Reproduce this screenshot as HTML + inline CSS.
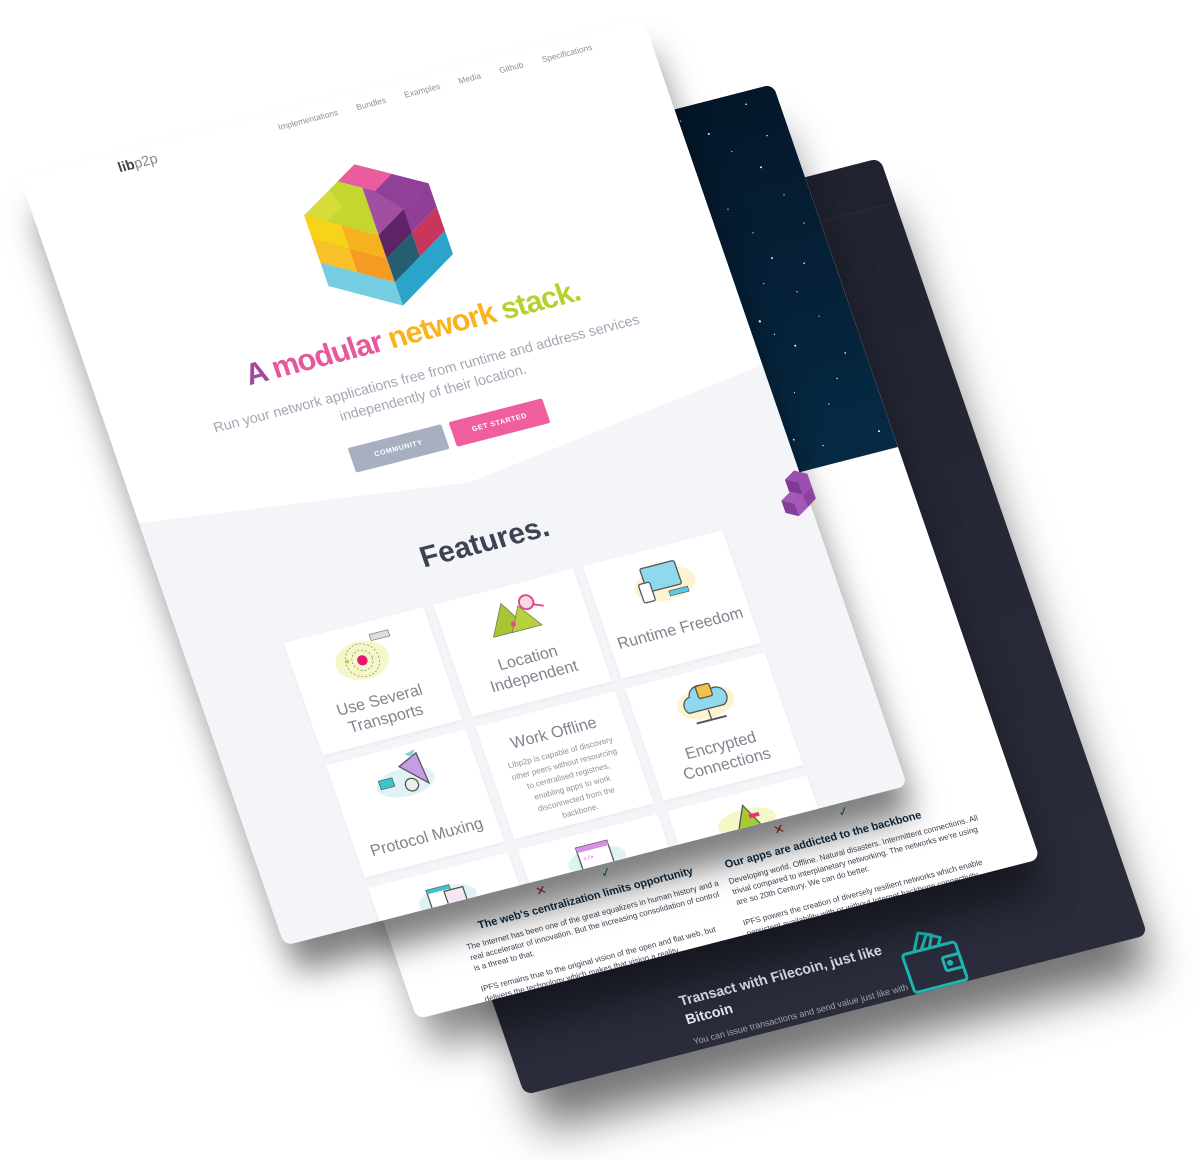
<!DOCTYPE html>
<html><head><meta charset="utf-8">
<style>
html,body{margin:0;padding:0;background:#fff;width:1195px;height:1160px;overflow:hidden;font-family:"Liberation Sans",sans-serif}
.pg{position:absolute;left:0;top:0;width:1000px;transform-origin:0 0;border-radius:14px;overflow:hidden}
.abs{position:absolute}
.nav span{margin-left:30px}
.card{position:absolute;width:224px;background:#fff;box-shadow:0 2px 6px rgba(40,50,80,.06);text-align:center;color:#6e727c}
.ct{font-size:25px;line-height:30px;color:#80848e}
.star{fill:#fff}
</style></head><body>

<!-- BACK PAGE -->
<div class="pg" style="height:1265px;transform:matrix(0.623,-0.16,0.2115,0.6142,257,318);background:linear-gradient(180deg,#20222f 0%,#262837 50%,#2a2c3b 100%);box-shadow:0 70px 70px -10px rgba(0,0,0,.55)">
  <div class="abs" style="left:0;top:72px;width:1000px;height:1px;background:#33364a"></div>
  <div class="abs" style="left:276px;top:1170px;width:400px;color:#e6e7ee;font-size:22px;line-height:30px;font-weight:bold">Transact with Filecoin, just like<br>Bitcoin</div>
  <div class="abs" style="left:276px;top:1240px;width:380px;color:#9ea1ae;font-size:14px;line-height:20px">You can issue transactions and send value just like with <u>Bitcoin and other cryptocurrencies</u>. And by doing so...</div>
  <svg class="abs" style="left:615px;top:1170px" width="110" height="100" viewBox="0 0 140 130">
    <g fill="none" stroke="#1eb5b0" stroke-width="6" stroke-linejoin="round">
      <path d="M40 40 L60 5 L85 15 L72 40"/>
      <path d="M55 40 L75 12 L100 25 L90 40"/>
      <rect x="15" y="40" width="110" height="80" rx="6"/>
      <rect x="90" y="65" width="35" height="28" rx="4"/>
      <circle cx="102" cy="79" r="3" fill="#1eb5b0"/>
    </g>
  </svg>
</div>

<!-- MIDDLE PAGE -->
<div class="pg" style="height:1262px;transform:matrix(0.623,-0.16,0.2115,0.6142,150,244);background:#fff;box-shadow:0 60px 60px -10px rgba(0,0,0,.45)">
  <div class="abs" style="left:0;top:0;width:1000px;height:591px;background:linear-gradient(180deg,#04172a,#072a44)">
    <svg width="1000" height="591" style="position:absolute;left:0;top:0">
      <g class="star">
        <circle cx="640" cy="40" r="1.6"/><circle cx="700" cy="70" r="1"/><circle cx="760" cy="30" r="1.8"/><circle cx="820" cy="90" r="1"/><circle cx="880" cy="50" r="1.5"/><circle cx="950" cy="20" r="1.2"/>
        <circle cx="610" cy="120" r="1"/><circle cx="680" cy="150" r="1.5"/><circle cx="740" cy="190" r="1"/><circle cx="800" cy="140" r="1.4"/><circle cx="870" cy="170" r="1"/><circle cx="940" cy="120" r="1.5"/>
        <circle cx="630" cy="230" r="1.4"/><circle cx="700" cy="260" r="1"/><circle cx="770" cy="250" r="1.8"/><circle cx="840" cy="230" r="1"/><circle cx="910" cy="260" r="1.4"/><circle cx="975" cy="220" r="1"/>
        <circle cx="650" cy="320" r="1"/><circle cx="720" cy="340" r="1.5"/><circle cx="790" cy="310" r="1"/><circle cx="860" cy="350" r="1.8"/><circle cx="930" cy="320" r="1"/>
        <circle cx="620" cy="400" r="1.5"/><circle cx="690" cy="430" r="1"/><circle cx="760" cy="410" r="1.4"/><circle cx="830" cy="440" r="1"/><circle cx="900" cy="400" r="1.5"/><circle cx="970" cy="430" r="1.2"/>
        <circle cx="640" cy="500" r="1"/><circle cx="710" cy="520" r="1.8"/><circle cx="780" cy="490" r="1"/><circle cx="850" cy="540" r="1.4"/><circle cx="920" cy="500" r="1"/><circle cx="980" cy="560" r="1.5"/>
        <circle cx="665" cy="95" r="0.9"/><circle cx="725" cy="115" r="1.2"/><circle cx="785" cy="60" r="0.9"/><circle cx="845" cy="20" r="1"/><circle cx="905" cy="85" r="0.9"/><circle cx="965" cy="75" r="1.1"/>
        <circle cx="655" cy="185" r="0.9"/><circle cx="715" cy="215" r="1.1"/><circle cx="775" cy="165" r="0.9"/><circle cx="835" cy="195" r="1.2"/><circle cx="895" cy="215" r="0.9"/><circle cx="960" cy="170" r="1"/>
        <circle cx="670" cy="285" r="1"/><circle cx="740" cy="295" r="0.9"/><circle cx="810" cy="275" r="1.1"/><circle cx="885" cy="295" r="0.9"/><circle cx="955" cy="280" r="1.2"/>
        <circle cx="665" cy="370" r="0.9"/><circle cx="735" cy="380" r="1.1"/><circle cx="805" cy="365" r="0.9"/><circle cx="875" cy="375" r="1"/><circle cx="950" cy="365" r="0.9"/>
        <circle cx="660" cy="460" r="1.1"/><circle cx="730" cy="470" r="0.9"/><circle cx="805" cy="455" r="1"/><circle cx="875" cy="470" r="0.9"/><circle cx="945" cy="465" r="1.1"/>
        <circle cx="675" cy="555" r="0.9"/><circle cx="745" cy="565" r="1"/><circle cx="815" cy="575" r="0.9"/><circle cx="890" cy="560" r="1.1"/>
        <circle cx="560" cy="60" r="1.5"/><circle cx="520" cy="200" r="1"/><circle cx="570" cy="330" r="1.4"/><circle cx="540" cy="470" r="1"/>
      </g>
    </svg>
    <div class="abs" style="left:560px;top:40px;color:#fff;font-size:13px">Blog</div>
  </div>
  <div class="abs" style="left:240px;top:1105px;color:#c0282f;font-size:20px">✕</div>
  <div class="abs" style="left:345px;top:1103px;color:#1a8a8a;font-size:20px">✓</div>
  <div class="abs" style="left:622px;top:1105px;color:#c0282f;font-size:20px">✕</div>
  <div class="abs" style="left:726px;top:1103px;color:#1a8a8a;font-size:20px">✓</div>
  <div class="abs" style="left:110px;top:1136px;width:400px;text-align:center;color:#0c2d4a;font-size:17px;font-weight:bold">The web's centralization limits opportunity</div>
  <div class="abs" style="left:490px;top:1140px;width:400px;text-align:center;color:#0c2d4a;font-size:17px;font-weight:bold">Our apps are addicted to the backbone</div>
  <div class="abs" style="left:110px;top:1166px;width:410px;color:#3c4350;font-size:12.5px;line-height:17px">The Internet has been one of the great equalizers in human history and a real accelerator of innovation. But the increasing consolidation of control is a threat to that.<br><br>IPFS remains true to the original vision of the open and flat web, but delivers the technology which makes that vision a reality.</div>
  <div class="abs" style="left:530px;top:1168px;width:410px;color:#3c4350;font-size:12.5px;line-height:17px">Developing world. Offline. Natural disasters. Intermittent connections. All trivial compared to interplanetary networking. The networks we're using are so 20th Century. We can do better.<br><br>IPFS powers the creation of diversely resilient networks which enable persistent availability with or without Internet backbone connectivity.</div>
</div>

<!-- FRONT PAGE -->
<div class="pg" style="height:1250px;transform:matrix(0.623,-0.16,0.2115,0.6142,20,178);background:#f4f5f9;box-shadow:0 50px 50px -5px rgba(0,0,0,.5);overflow:visible">
  <div style="position:absolute;inset:0;border-radius:14px;overflow:hidden">
  <svg class="abs" style="left:0;top:0" width="1000" height="640"><polygon points="0,0 1000,0 1000,565 509,628 0,562" fill="#fff"/></svg>
  <div class="abs" style="left:150px;top:10px;font-size:22px;color:#555"><b style="color:#444">lib</b><span style="font-weight:normal;color:#888">p2p</span></div>
  <div class="abs nav" style="left:350px;top:16px;width:560px;text-align:right;font-size:13px;color:#8c909c;white-space:nowrap"><span>Implementations</span><span>Bundles</span><span>Examples</span><span>Media</span><span>Github</span><span>Specifications</span></div>
  <svg class="abs" style="left:400px;top:108px" width="200" height="230" viewBox="0 0 200 230">
    <polygon points="0,57 100,0 100,115" fill="#c4d630"/>
    <polygon points="0,57 50,29 60,60 20,80" fill="#d8dc3a"/>
    <polygon points="100,0 200,57 100,115" fill="#a24ea2"/>
    <polygon points="100,0 150,29 117,48 67,19" fill="#ea5c9d"/>
    <polygon points="117,48 150,29 200,57 150,86" fill="#8e4196"/>
    <polygon points="0,57 100,115 100,153 0,95" fill="#f6b21e"/>
    <polygon points="0,57 50,86 50,124 0,95" fill="#f8d31a"/>
    <polygon points="0,95 100,153 100,192 0,134" fill="#f59a22"/>
    <polygon points="0,95 50,124 50,163 0,134" fill="#f9c129"/>
    <polygon points="0,134 100,192 100,230 0,172" fill="#75cde2"/>
    <polygon points="100,115 200,57 200,95 100,153" fill="#8f3f98"/>
    <polygon points="100,115 150,86 150,124 100,153" fill="#5e2566"/>
    <polygon points="100,153 150,124 150,163 100,192" fill="#245e70"/>
    <polygon points="150,124 200,95 200,134 150,163" fill="#c9365c"/>
    <polygon points="100,192 200,134 200,172 100,230" fill="#2aa4c8"/>
  </svg>
  <div class="abs" style="left:0;top:354px;width:1000px;text-align:center;font-size:47px;font-weight:bold;letter-spacing:-1.5px;white-space:nowrap"><span style="color:#a04a9f">A</span> <span style="color:#e9579b">modular</span> <span style="color:#f8b31e">network</span> <span style="color:#b9cf2d">stack.</span></div>
  <div class="abs" style="left:0;top:433px;width:1000px;text-align:center;font-size:22px;line-height:31px;color:#a2a7b3">Run your network applications free from runtime and address services<br>independently of their location.</div>
  <div class="abs" style="left:346px;top:530px;width:150px;height:40px;background:#a7afc1;border-radius:3px;color:#fff;font-size:11px;font-weight:bold;letter-spacing:1px;text-align:center;line-height:40px">COMMUNITY</div>
  <div class="abs" style="left:508px;top:530px;width:150px;height:40px;background:#ef5fa0;border-radius:3px;color:#fff;font-size:11px;font-weight:bold;letter-spacing:1px;text-align:center;line-height:40px">GET STARTED</div>
  <div class="abs" style="left:0;top:695px;width:1000px;text-align:center;font-size:46px;font-weight:bold;color:#3d4352">Features.</div>

  <div class="card" style="left:153px;top:797px;height:183px">
    <svg width="120" height="80" style="margin-top:14px" viewBox="0 0 120 80"><ellipse cx="55" cy="42" rx="42" ry="30" fill="#f5f7c8"/><circle cx="55" cy="42" r="26" fill="none" stroke="#777" stroke-dasharray="3 3"/><circle cx="55" cy="42" r="16" fill="none" stroke="#777" stroke-dasharray="3 3"/><circle cx="55" cy="42" r="8" fill="#e8176e"/><circle cx="32" cy="38" r="3" fill="#b8d23a"/><rect x="78" y="6" width="30" height="10" fill="#ddd" stroke="#777"/></svg>
    <div class="ct" style="margin-top:8px">Use Several<br>Transports</div></div>
  <div class="card" style="left:393px;top:797px;height:183px">
    <svg width="120" height="70" style="margin-top:12px" viewBox="0 0 120 70"><polygon points="20,60 48,12 76,60" fill="#a7c634" stroke="#666"/><polygon points="50,60 72,22 98,60" fill="#b6d13c" stroke="#666"/><circle cx="86" cy="20" r="11" fill="#f7d8e6" stroke="#e04a8a" stroke-width="3"/><line x1="96" y1="26" x2="110" y2="32" stroke="#e04a8a" stroke-width="3"/><circle cx="56" cy="48" r="4" fill="#e04a8a"/></svg>
    <div class="ct" style="margin-top:14px">Location<br>Independent</div></div>
  <div class="card" style="left:633px;top:797px;height:183px">
    <svg width="120" height="80" style="margin-top:14px" viewBox="0 0 120 80"><ellipse cx="60" cy="44" rx="48" ry="26" fill="#fbf3d2"/><rect x="30" y="12" width="55" height="38" rx="3" fill="#8fd9ee" stroke="#555" stroke-width="2"/><rect x="20" y="35" width="18" height="30" rx="3" fill="#fff" stroke="#555" stroke-width="2"/><rect x="62" y="56" width="30" height="8" fill="#5cc9e6" stroke="#555"/></svg>
    <div class="ct" style="margin-top:16px">Runtime Freedom</div></div>
  <div class="card" style="left:153px;top:996px;height:183px">
    <svg width="130" height="80" style="margin-top:10px" viewBox="0 0 130 80"><ellipse cx="62" cy="46" rx="46" ry="22" fill="#dff3f6"/><polygon points="60,20 92,6 96,56" fill="#c79be6" stroke="#555" stroke-width="2"/><circle cx="70" cy="52" r="10" fill="#eee" stroke="#555" stroke-width="2"/><rect x="22" y="34" width="22" height="14" fill="#3fc3c7" stroke="#555"/><polygon points="74,4 92,0 84,10" fill="#7bd6d2"/></svg>
    <div class="ct" style="margin-top:36px">Protocol Muxing</div></div>
  <div class="card" style="left:393px;top:996px;height:183px">
    <div class="ct" style="margin-top:24px">Work Offline</div>
    <div style="font-size:12.5px;line-height:19px;color:#8d919b;margin:8px 26px 0">Libp2p is capable of discovery other peers without resourcing to centralised registries, enabling apps to work disconnected from the backbone.</div></div>
  <div class="card" style="left:633px;top:996px;height:183px">
    <svg width="120" height="80" style="margin-top:10px" viewBox="0 0 120 80"><ellipse cx="60" cy="42" rx="45" ry="25" fill="#fbf3d2"/><path d="M30 52 a14 14 0 0 1 8 -24 a18 18 0 0 1 34 -4 a14 14 0 0 1 14 28 z" fill="#8fd9ee" stroke="#555" stroke-width="2"/><rect x="52" y="14" width="22" height="20" rx="3" fill="#f3c24a" stroke="#555" stroke-width="2"/><line x1="60" y1="54" x2="60" y2="70" stroke="#555" stroke-width="2"/><line x1="36" y1="70" x2="84" y2="70" stroke="#555" stroke-width="3"/></svg>
    <div class="ct" style="margin-top:12px">Encrypted<br>Connections</div></div>
  <div class="card" style="left:153px;top:1196px;height:183px">
    <svg width="120" height="60" style="margin-top:10px" viewBox="0 0 120 60"><ellipse cx="60" cy="36" rx="46" ry="20" fill="#dff3f6"/><rect x="32" y="16" width="36" height="30" fill="#fff" stroke="#555" stroke-width="2"/><rect x="32" y="16" width="36" height="6" fill="#3fc3c7"/><rect x="58" y="24" width="30" height="26" fill="#f6e6f4" stroke="#555" stroke-width="2"/></svg></div>
  <div class="card" style="left:393px;top:1196px;height:183px">
    <svg width="120" height="60" style="margin-top:10px" viewBox="0 0 120 60"><ellipse cx="60" cy="36" rx="46" ry="20" fill="#dff3f6"/><rect x="34" y="10" width="50" height="40" fill="#fff" stroke="#555" stroke-width="2"/><rect x="34" y="10" width="50" height="8" fill="#d690e8"/><text x="40" y="32" font-size="9" fill="#c04ad0" font-family="Liberation Mono,monospace">&lt;/&gt;</text></svg></div>
  <div class="card" style="left:633px;top:1196px;height:183px">
    <svg width="120" height="60" style="margin-top:6px" viewBox="0 0 120 60"><ellipse cx="60" cy="40" rx="46" ry="20" fill="#f5f7c8"/><polygon points="40,58 62,14 84,58" fill="#a8c834" stroke="#555" stroke-width="2"/><rect x="66" y="30" width="16" height="6" fill="#e8306a"/></svg></div>
  </div>
  <svg class="abs" style="left:955px;top:735px" width="70" height="80" viewBox="0 0 70 80">
    <polygon points="20,10 38,0 56,10 56,30 38,40 20,30" fill="#9a4fb0"/>
    <polygon points="20,10 38,20 38,40 20,30" fill="#7d3a94"/>
    <polygon points="4,40 22,30 40,40 40,60 22,70 4,60" fill="#a458b8"/>
    <polygon points="4,40 22,50 22,70 4,60" fill="#82409a"/>
    <polygon points="38,40 56,30 56,50 40,60" fill="#8a45a0"/>
  </svg>
</div>

</body></html>
